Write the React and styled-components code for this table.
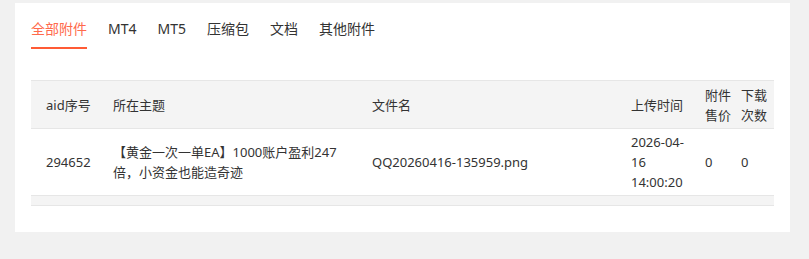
import styled, { createGlobalStyle } from "styled-components";

const GlobalStyle = createGlobalStyle`
  body {
    margin: 0;
    background: #f1f1f1;
    font-family: "Noto Sans", "Noto Sans CJK SC", sans-serif;
    color: #333;
  }
`;

const tabs = ["全部附件", "MT4", "MT5", "压缩包", "文档", "其他附件"];

const columns = [
  { title: "aid序号", width: 82, padLeft: 15, padRight: 0 },
  { title: "所在主题", width: 259, padLeft: 0, padRight: 28 },
  { title: "文件名", width: 259, padLeft: 0, padRight: 10 },
  { title: "上传时间", width: 74, padLeft: 0, padRight: 14 },
  { title: "附件售价", width: 36, padLeft: 0, padRight: 6 },
  { title: "下载次数", width: 33, padLeft: 0, padRight: 0 },
];

const rows = [
  [
    "294652",
    "【黄金一次一单EA】1000账户盈利247倍，小资金也能造奇迹",
    "QQ20260416-135959.png",
    "2026-04-16 14:00:20",
    "0",
    "0",
  ],
];

export default function App() {
  return (
    <>
      <GlobalStyle />
      <Card>
        <TabBar>
          {tabs.map((t, i) => (
            <Tab key={t} active={i === 0}>
              {t}
            </Tab>
          ))}
        </TabBar>
        <Table>
          <HeadRow>
            {columns.map((c) => (
              <Cell key={c.title} padLeft={c.padLeft} padRight={c.padRight}>
                {c.title}
              </Cell>
            ))}
          </HeadRow>
          {rows.map((r) => (
            <BodyRow key={r[0]}>
              {r.map((v, i) => (
                <Cell key={i} padLeft={columns[i].padLeft} padRight={columns[i].padRight}>
                  {v}
                </Cell>
              ))}
            </BodyRow>
          ))}
          <ScrollStrip />
        </Table>
      </Card>
    </>
  );
}

const Card = styled.div`
  margin: 3px 19px 0 15px;
  background: #fff;
  padding: 8px 16px 26px 16px;
`;

const TabBar = styled.div`
  display: flex;
  gap: 21px;
  margin-bottom: 31px;
`;

const Tab = styled.div`
  font-size: 14px;
  line-height: 36px;
  border-bottom: 2px solid ${(p) => (p.active ? "#ff5b35" : "transparent")};
  color: ${(p) => (p.active ? "#ff6a4c" : "#333")};
`;

const Table = styled.div`
  border-top: 1px solid #e6e6e6;
  font-size: 13px;
  line-height: 20px;
`;

const grid = columns.map((c) => `${c.width}px`).join(" ");

const HeadRow = styled.div`
  display: grid;
  grid-template-columns: ${grid};
  align-items: center;
  background: #f4f4f4;
  border-bottom: 1px solid #e6e6e6;
  min-height: 47px;
`;

const BodyRow = styled.div`
  display: grid;
  grid-template-columns: ${grid};
  align-items: center;
  background: #fff;
  border-bottom: 1px solid #e6e6e6;
  min-height: 66px;
`;

const Cell = styled.div`
  padding: 3px ${(p) => p.padRight}px 3px ${(p) => p.padLeft}px;
  word-break: break-word;
`;

const ScrollStrip = styled.div`
  height: 9px;
  background: #f4f4f4;
  border-bottom: 1px solid #e6e6e6;
`;
